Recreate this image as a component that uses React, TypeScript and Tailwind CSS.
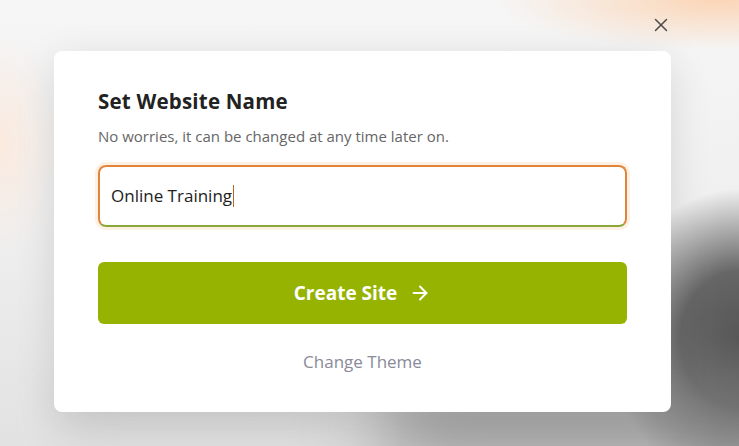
import { X, ArrowRight } from "lucide-react"

const FONT = "font-['Open_Sans','Noto_Sans',sans-serif]"

export default function App() {
    return (
        <div
            className={`relative w-[739px] h-[446px] overflow-hidden ${FONT} bg-[#f3f3f3] bg-[radial-gradient(ellipse_130px_150px_at_100%_76%,#555_0%,#666_45%,transparent_100%),radial-gradient(ellipse_220px_50px_at_97%_0%,#fbd5b6_0%,transparent_100%),radial-gradient(ellipse_60px_110px_at_0%_32%,#fbeadf_0%,transparent_100%),linear-gradient(180deg,#f6f6f6_0%,#efefef_50%,#e2e2e2_100%)]`}
        >
            {/* bottom shadow band under the card */}
            <div className="absolute left-[370px] top-[385px] w-[430px] h-[80px] rounded-full bg-[#7e7e7e] blur-2xl opacity-80" />
            <div className="absolute left-[60px] top-[395px] w-[300px] h-[40px] rounded-full bg-[#d2d2d2] blur-xl opacity-70" />

            <button className="absolute left-[650px] top-[14px] text-[#4a4a4a] flex items-center justify-center w-[22px] h-[22px]">
                <X size={22} strokeWidth={1.6} />
            </button>

            <div className="flex justify-start pl-[54px] pt-[51px]">
                <div className="relative w-[617px] h-[361px] bg-white rounded-lg shadow-[0_10px_40px_rgba(0,0,0,0.12)] px-[44px] pt-[36px]">
                    <h2 className="text-[20.5px] font-bold text-[#222] leading-7 tracking-[0.2px]">Set Website Name</h2>
                    <p className="mt-[11px] text-[15px] text-[#666] leading-5">
                        No worries, it can be changed at any time later on.
                    </p>

                    <div className="mt-[19px] h-[62px] rounded-lg border-2 border-[#e2853c] border-b-[#8aa838] shadow-[0_0_0_3px_#fdf1e4] flex items-center px-[11px]">
                        <span className="text-[17px] text-[#222]">Online Training</span>
                        <span className="ml-px w-px h-[22px] bg-[#b8651f]" />
                    </div>

                    <button className="mt-[35px] w-full h-[62px] rounded-md bg-[#95b300] text-white font-bold text-[19px] flex items-center justify-center gap-3">
                        Create Site
                        <ArrowRight size={22} strokeWidth={2.2} />
                    </button>

                    <div className="mt-[25px] text-center text-[17px] text-[#8a8a99]">Change Theme</div>
                </div>
            </div>
        </div>
    )
}
